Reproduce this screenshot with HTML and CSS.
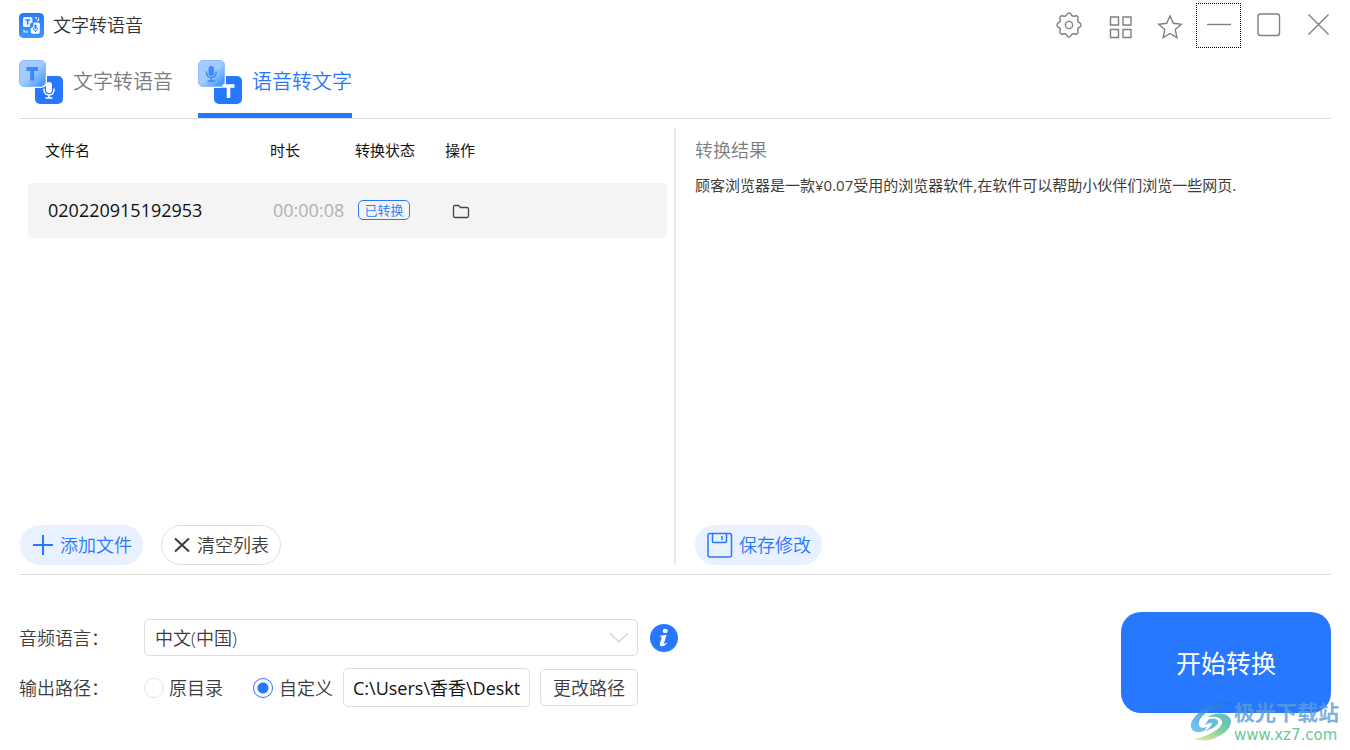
FILE: index.html
```html
<!DOCTYPE html>
<html lang="zh-CN">
<head>
<meta charset="utf-8">
<meta name="viewport" content="width=device-width, initial-scale=1">
<title>文字转语音</title>
<link rel="stylesheet" href="styles.css">
</head>
<body>
<div class="window">
  <header class="titlebar">
    <svg class="logo" viewBox="0 0 25 25" aria-hidden="true">
      <defs><linearGradient id="logoFill" x1="0" y1="0" x2="0" y2="1"><stop offset="0" stop-color="#2478ff"/><stop offset="1" stop-color="#3d97fb"/></linearGradient></defs>
      <rect width="25" height="25" rx="4.500" fill="url(#logoFill)"/>
      <path d="M5.500 4h6.500q1.500 0 1.500 1.500v4q-2.500.3-2.500 2.500v2H5.500Q4 14 4 12.500V5.500Q4 4 5.500 4z" fill="#e9f3ff"/>
      <path d="M6.500 7h4.500M8.700 7v4.500" stroke="#2c80ff" stroke-width="1.500" fill="none"/>
      <path d="M14.500 9.500h4.500q1.800 0 1.800 1.800v7.700q0 1.800-1.800 1.800h-5.500q-1.800 0-1.800-1.800V15q2.800-.5 2.800-3z" fill="#fff"/>
      <rect x="15.300" y="11.500" width="2.400" height="4.500" rx="1.200" fill="#3188ff"/>
      <path d="M14 15q.3 2.500 2.500 2.500T19 15M16.500 17.500v1.500" stroke="#3188ff" fill="none"/>
      <path d="M15.500 4.500h1.700v1.700M19.500 4.500v3h-1.800M5 16.500v2.300h2M8 17.500v2.500" stroke="#cfe5ff" stroke-width="1.200" fill="none"/>
    </svg>
    <h1 class="app-title">文字转语音</h1>
    <div class="controls">
      <button class="control" type="button" aria-label="设置">
        <svg width="28" height="28" viewBox="-1 -1 28 28"><g transform="translate(-1 -1)"><circle cx="14" cy="14" r="3.600"/><path d="M11.900 3.400A2.300 2.300 0 0 1 16.100 3.400A3 3 0 0 0 20 5A2.300 2.300 0 0 1 23 8A3 3 0 0 0 24.600 11.900A2.300 2.300 0 0 1 24.600 16.100A3 3 0 0 0 23 20A2.300 2.300 0 0 1 20 23A3 3 0 0 0 16.100 24.600A2.300 2.300 0 0 1 11.900 24.600A3 3 0 0 0 8 23A2.300 2.300 0 0 1 5 20A3 3 0 0 0 3.400 16.100A2.300 2.300 0 0 1 3.400 11.900A3 3 0 0 0 5 8A2.300 2.300 0 0 1 8 5A3 3 0 0 0 11.900 3.400z"/></g></svg>
      </button>
      <button class="control" type="button" aria-label="应用">
        <svg width="28" height="28" viewBox="0 0 28 28"><path d="M5.500 6h8v8h-8zM18 6h8v8h-8zM5.500 18.500h8v8h-8zM18 18.500h8v8h-8z"/></svg>
      </button>
      <button class="control" type="button" aria-label="收藏">
        <svg width="28" height="28" viewBox="0 0 28 28"><path d="M15 5l3.300 7.300 8 .9-6 5.400 1.600 7.900-6.900-4-6.900 4 1.600-7.900-6-5.400 8-.9z"/></svg>
      </button>
      <button class="control control-focused" type="button" aria-label="最小化">
        <svg width="28" height="28" viewBox="0 0 28 28"><path d="M2 13.500h24"/></svg>
      </button>
      <button class="control" type="button" aria-label="最大化">
        <svg width="28" height="28" viewBox="0 0 28 28"><rect x="3" y="3" width="21.500" height="21.500" rx="2.500"/></svg>
      </button>
      <button class="control" type="button" aria-label="关闭">
        <svg width="28" height="28" viewBox="0 0 28 28"><path d="M3.500 3.500l20 20M23.500 3.500l-20 20"/></svg>
      </button>
    </div>
  </header>

  <nav class="tabs">
    <a class="tab" href="#tts">
      <svg class="tab-icon" viewBox="0 0 44 44" aria-hidden="true">
        <defs><linearGradient id="glass" x1="0" y1="0" x2="1" y2="1"><stop offset="0" stop-color="#a9ccff"/><stop offset=".5" stop-color="#a0cbff"/><stop offset="1" stop-color="#2c8bff"/></linearGradient></defs>
        <rect x="16" y="16" width="28" height="28" rx="5" fill="#2878ff"/>
        <rect x="-1" y="-1" width="29" height="29" rx="6" fill="#fff"/>
        <rect x=".5" y=".5" width="26" height="26" rx="4.500" fill="url(#glass)" stroke="#8dbcff"/>
        <path d="M7.500 9h11.500M13.200 9v11.500" stroke="#3d87ff" stroke-width="4" fill="none"/>
        <rect x="27" y="22" width="6" height="11" rx="3" fill="#fff"/>
        <path d="M25 28.500v1.500q.5 5 5 5t5-5v-1.500M30 35v3M26.500 38h7" stroke="#fff" stroke-width="1.500" fill="none"/>
      </svg>
      <span>文字转语音</span>
    </a>
    <a class="tab tab-active" href="#stt" aria-current="page">
      <svg class="tab-icon" viewBox="0 0 44 44" aria-hidden="true">
        <rect x="16" y="16" width="28" height="28" rx="5" fill="#2878ff"/>
        <rect x="-1" y="-1" width="29" height="29" rx="6" fill="#fff"/>
        <rect x=".5" y=".5" width="26" height="26" rx="4.500" fill="url(#glass)" stroke="#8dbcff"/>
        <rect x="10.500" y="6" width="5.500" height="10" rx="2.700" fill="#3d87ff"/>
        <path d="M8.500 11.500v1.500q.5 4.500 4.800 4.500T18 13v-1.500M13.300 17.500v3.500M9.500 21h7.500" stroke="#3d87ff" stroke-width="1.500" fill="none"/>
        <path d="M24.500 26h12M30.500 26v12" stroke="#fff" stroke-width="3.500" fill="none"/>
      </svg>
      <span>语音转文字</span>
    </a>
  </nav>

  <main class="workspace">
    <section class="files">
      <table class="file-table">
        <colgroup><col class="col-name"><col class="col-time"><col class="col-state"><col></colgroup>
        <thead><tr><th scope="col">文件名</th><th scope="col">时长</th><th scope="col">转换状态</th><th scope="col">操作</th></tr></thead>
        <tbody><tr>
          <td>020220915192953</td>
          <td class="duration">00:00:08</td>
          <td><span class="badge">已转换</span></td>
          <td>
            <button class="folder" type="button" aria-label="打开文件夹">
              <svg width="18" height="16" viewBox="0 0 18 16"><path d="M1.500 3q0-1.500 1.500-1.500h3.500l2 2H15q1.500 0 1.500 1.500v7q0 1.500-1.500 1.500H3Q1.500 13.500 1.500 12z"/></svg>
            </button>
          </td>
        </tr></tbody>
      </table>
      <div class="actions">
        <button class="pill pill-blue" type="button">
          <svg width="22" height="22" viewBox="0 0 22 22"><path d="M11 1v20M1 11h20"/></svg>添加文件
        </button>
        <button class="pill pill-outline" type="button">
          <svg width="18" height="18" viewBox="0 0 18 18"><path d="M2 2.500l14 13M16 2.500l-14 13"/></svg>清空列表
        </button>
      </div>
    </section>
    <section class="result">
      <h2 class="result-title">转换结果</h2>
      <p class="result-text">顾客浏览器是一款¥0.07受用的浏览器软件,在软件可以帮助小伙伴们浏览一些网页.</p>
      <div class="actions">
        <button class="pill pill-blue" type="button">
          <svg class="thin" width="26" height="26" viewBox="0 0 26 26"><rect x="1" y="1.500" width="23.500" height="23.500" rx="2"/><path d="M5.500 1.500v8q0 1 1 1h12q1 0 1-1v-8"/><path d="M15 4v4"/></svg>保存修改
        </button>
      </div>
    </section>
  </main>

  <footer class="settings">
    <div class="form">
      <div class="row">
        <label class="row-label" for="language">音频语言：</label>
        <div class="select-wrap">
          <select class="box language" id="language"><option>中文(中国)</option></select>
          <svg class="chevron" width="20" height="12" viewBox="0 0 20 12" aria-hidden="true"><path d="M1 1l9 9 9-9"/></svg>
        </div>
        <button class="info" type="button" aria-label="说明">
          <svg width="28" height="28" viewBox="0 0 28 28"><circle cx="14" cy="14" r="14" fill="#2878ff"/><ellipse cx="15.200" cy="6.900" rx="2.500" ry="2.200" fill="#fff"/><path d="M10 11.700l6.500-.9-2.400 8.500q-.3 1.300 2.600-.5l.3.700q-2.600 3-5.500 2.700-2.300-.4-1.500-3l1.600-5.300q.3-1.400-1.700-1.400z" fill="#fff"/></svg>
        </button>
      </div>
      <div class="row">
        <span class="row-label" id="path-label">输出路径：</span>
        <div class="path" role="group" aria-labelledby="path-label">
          <label class="choice"><input type="radio" name="dir">原目录</label>
          <label class="choice choice-custom"><input type="radio" name="dir" checked>自定义</label>
          <input class="box path-input" type="text" aria-label="自定义路径" value="C:\Users\香香\Deskt">
          <button class="box change" type="button">更改路径</button>
        </div>
      </div>
    </div>
    <button class="start" type="button">开始转换</button>
  </footer>

  <div class="watermark">
    <svg width="44" height="40" viewBox="0 0 44 40" aria-hidden="true">
      <defs>
        <linearGradient id="wmBlue" x1="0" y1="1" x2="1" y2="0"><stop offset="0" stop-color="#56bdea"/><stop offset="1" stop-color="#1769c8"/></linearGradient>
        <linearGradient id="wmGreen" x1="0" y1="1" x2="1" y2="0"><stop offset="0" stop-color="#e2e978"/><stop offset=".6" stop-color="#55c08c"/><stop offset="1" stop-color="#3fa7ba"/></linearGradient>
      </defs>
      <path d="M43 1C24 0 4 11 1 23c-1 7 5 10 13 7l3-4c-6 2-9 0-8-5C11 13 25 4 43 1z" fill="url(#wmBlue)"/>
      <path d="M17 16c8-5 21-5 24 3 1 7-6 14-16 18-7 3-14 3-21 1 11-2 27-9 28-16 0-6-7-7-15-6z" fill="url(#wmGreen)"/>
      <path d="M19 18c6-1 10 0 9 4-1 3-6 6-13 8 4-3 7-5 7-8-3 0-6 1-8 3z" fill="#43acd0"/>
    </svg>
    <div class="watermark-text"><span class="watermark-name">极光下载站</span><span class="watermark-url">www.xz7.com</span></div>
  </div>
</div>
</body>
</html>
```
FILE: styles.css
```css
* { box-sizing: border-box; }

body {
  margin: 0;
  background: #fff;
  color: #3c3c3c;
  font: 350 18px/24px "Open Sans", "Noto Sans CJK SC", sans-serif;
}

button, input, select { font: inherit; color: inherit; margin: 0; }
button { padding: 0; border: 0; background: none; cursor: pointer; }
svg { display: block; flex: none; }

.window {
  position: relative;
  display: flex;
  flex-direction: column;
  min-height: 100vh;
  overflow: hidden;
}

.titlebar {
  display: flex;
  align-items: center;
  gap: 9px;
  height: 50px;
  padding: 0 9px 0 19px;
}
.logo { width: 25px; height: 25px; }
.app-title { margin: 0; font-size: 18px; font-weight: 350; color: #333; }
.controls { display: flex; gap: 5px; margin-left: auto; }
.control {
  display: grid;
  place-items: center;
  width: 45px;
  height: 45px;
}
.control svg { fill: none; stroke: #808080; stroke-width: 1.400; }
.control-focused { border: 1px dotted #000; }

.tabs {
  display: flex;
  gap: 25px;
  margin: 0 19px;
  border-bottom: 1px solid #dedede;
}
.tab {
  display: flex;
  align-items: center;
  gap: 10px;
  height: 68px;
  border-bottom: 5px solid transparent;
  font-size: 20px;
  color: #7c7c7c;
  text-decoration: none;
}
.tab-active { color: #2878ff; border-color: #2878ff; }
.tab-icon { width: 44px; height: 44px; }

.workspace {
  flex: 1;
  display: grid;
  grid-template-columns: 657fr 655fr;
  margin: 0 19px;
  padding: 9px 0;
  border-bottom: 1px solid #dedede;
}
.files, .result { display: flex; flex-direction: column; min-width: 0; }
.files { padding: 0 7px 0 9px; border-right: 2px solid #ebebeb; }
.result { padding: 10px 0 0 19px; }

.file-table { width: 100%; table-layout: fixed; border-collapse: separate; border-spacing: 0; }
.col-name { width: 225px; }
.col-time { width: 85px; }
.col-state { width: 90px; }
.file-table th {
  height: 55px;
  padding: 0 0 12px 17px;
  font-size: 15px;
  font-weight: 400;
  text-align: left;
  color: #111;
}
.file-table td {
  height: 55px;
  padding: 0 0 2px 20px;
  background: #f4f4f4;
  color: #111;
  font-weight: 400;
  white-space: nowrap;
}
.file-table td:first-child { border-radius: 5px 0 0 5px; }
.file-table td:last-child { padding: 2px 0 0 24px; border-radius: 0 5px 5px 0; }
.file-table .duration { color: #b0b0b0; }
.badge {
  display: block;
  width: 52px;
  border: 1px solid #2878ff;
  border-radius: 5px;
  font-size: 13px;
  font-weight: 350;
  line-height: 18px;
  text-align: center;
  color: #2878ff;
}
.folder { display: block; }
.folder svg { fill: none; stroke: #444; stroke-width: 1.300; }

.actions { display: flex; gap: 18px; margin-top: auto; }
.files .actions { margin-left: -8px; }
.pill {
  display: flex;
  align-items: center;
  gap: 6px;
  height: 40px;
  padding: 0 11px;
  border-radius: 20px;
}
.pill svg { fill: none; stroke: currentColor; stroke-width: 2; }
.pill .thin { stroke-width: 1.500; }
.pill-blue { padding-left: 12px; background: #e9f0ff; color: #2878ff; }
.pill-outline { border: 1px solid #dedede; }

.result-title { margin: 0; font-size: 18px; font-weight: 350; color: #7c7c7c; }
.result-text { margin: 11px 0; font-size: 15px; font-weight: 400; }

.settings {
  display: flex;
  justify-content: space-between;
  align-items: flex-start;
  padding: 37px 19px;
}
.form { display: grid; gap: 12px; padding-top: 7px; }
.row { display: flex; align-items: center; min-height: 37px; }
.row-label { width: 125px; }
.box {
  height: 37px;
  border: 1px solid #dedede;
  border-radius: 5px;
  background: #fff;
}
.select-wrap { position: relative; width: 494px; }
.language { display: block; width: 100%; padding: 0 10px; appearance: none; }
.chevron {
  position: absolute;
  right: 9px;
  top: 13px;
  fill: none;
  stroke: #d8d8d8;
  stroke-width: 1.500;
  pointer-events: none;
}
.info { margin-left: 12px; }
.path { display: flex; align-items: center; width: 494px; }
.choice { display: flex; align-items: center; gap: 5px; margin-right: 30px; }
.choice-custom { gap: 6px; margin-right: 10px; }
.choice input {
  appearance: none;
  flex: none;
  width: 20px;
  height: 20px;
  border: 1px solid #e4e4e4;
  border-radius: 50%;
}
.choice input:checked {
  border-color: #2878ff;
  background: radial-gradient(circle, #2878ff 5px, #fff 6px);
}
.path-input {
  flex: 1;
  min-width: 0;
  height: 39px;
  margin-right: 10px;
  padding: 0 9px 2px;
  color: #111;
  font-weight: 400;
}
.change { padding: 0 12px; }

.start {
  width: 210px;
  height: 101px;
  border-radius: 20px;
  background: #2878ff;
  color: #fff;
  font-size: 25px;
  font-weight: 400;
}

.watermark {
  position: absolute;
  right: 11px;
  bottom: 6px;
  display: flex;
  align-items: center;
  opacity: 0.8;
  pointer-events: none;
}
.watermark-text { display: flex; flex-direction: column; }
.watermark-name { font-size: 21px; font-weight: 700; line-height: 28px; color: #5d9ed8; }
.watermark-url { font: 400 15px/18px "DejaVu Sans", sans-serif; color: #45b97c; }
```
